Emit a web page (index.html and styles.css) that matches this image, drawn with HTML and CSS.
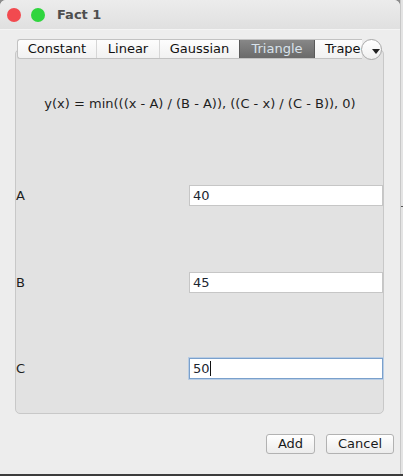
FILE: index.html
```html
<!DOCTYPE html>
<html>
<head>
<meta charset="utf-8">
<link rel="stylesheet" href="styles.css">
</head>
<body>
<div class="screen">
  <div class="window">
    <div class="titlebar">
      <span class="dot red"></span>
      <span class="dot green"></span>
      <span class="title">Fact 1</span>
    </div>
    <div class="content">
      <div class="tabbed">
        <div class="tabrow">
          <div class="tabs">
            <span class="tab w80">Constant</span>
            <span class="tab w63">Linear</span>
            <span class="tab w80">Gaussian</span>
            <span class="tab w75 selected">Triangle</span>
            <span class="tab last">Trape</span>
          </div>
          <span class="more">
            <svg width="8" height="5" viewBox="0 0 8 5"><path d="M0 0 L8 0 L4 5 Z" fill="#222"/></svg>
          </span>
        </div>
        <div class="panel">
          <div class="formula">y(x) = min(((x - A) / (B - A)), ((C - x) / (C - B)), 0)</div>
          <div class="row first">
            <span class="label">A</span>
            <span class="field">40</span>
          </div>
          <div class="row">
            <span class="label">B</span>
            <span class="field">45</span>
          </div>
          <div class="row last-row">
            <span class="label">C</span>
            <span class="field focused">50<span class="caret"></span></span>
          </div>
        </div>
      </div>
      <div class="buttons">
        <span class="btn add">Add</span>
        <span class="btn cancel">Cancel</span>
      </div>
    </div>
  </div>
  <div class="desk"><span class="deskline"></span></div>
</div>
</body>
</html>
```
FILE: styles.css
```css
html, body {
  margin: 0;
  padding: 0;
  background: #5a5a5a;
  font-family: "DejaVu Sans", sans-serif;
  font-size: 13px;
  color: #1e1e1e;
}
.screen {
  display: flex;
  width: 403px;
  height: 476px;
  overflow: hidden;
  background: linear-gradient(#8c8c8c, #3c3c3c);
}
.window {
  width: 400px;
  height: 474px;
  flex: none;
  background: #ededed;
  border-radius: 6px 6px 0 0;
  display: flex;
  flex-direction: column;
}
.desk {
  flex: 1;
  height: 474px;
  background: #e4e4e4;
  border-left: 1px solid #c8c8c8;
  display: flex;
  flex-direction: column;
  padding-top: 206px;
  box-sizing: border-box;
}
.deskline {
  height: 1px;
  background: #555;
}
.titlebar {
  height: 30px;
  display: flex;
  align-items: center;
  padding-left: 7px;
  background: linear-gradient(#ececec, #e0e0e0);
  border-radius: 6px 6px 0 0;
  border-bottom: 1px solid #f4f4f4;
  box-sizing: border-box;
}
.dot {
  width: 14px;
  height: 14px;
  border-radius: 50%;
  margin-right: 10px;
}
.red { background: #f24a4f; }
.green { background: #2fd53e; }
.title {
  margin-left: 2px;
  font-weight: bold;
  color: #4e4e4e;
  font-size: 13px;
}
.content {
  flex: 1;
  display: flex;
  flex-direction: column;
  padding: 9px 16px 0 15px;
}
.tabbed {
  display: flex;
  flex-direction: column;
}
.tabrow {
  display: flex;
  align-items: center;
  height: 20px;
  margin-left: 2px;
  margin-bottom: -10px;
  position: relative;
  z-index: 1;
}
.tabs {
  display: flex;
  width: 345px;
  height: 20px;
  overflow: hidden;
  border: 1px solid #c2c2c2;
  border-right: none;
  border-radius: 3px 0 0 3px;
  box-sizing: border-box;
  background: linear-gradient(#fdfdfd, #f1f1f1);
}
.tab {
  flex: none;
  height: 18px;
  line-height: 18px;
  border-right: 1px solid #d6d6d6;
  color: #111;
  white-space: nowrap;
  text-align: center;
  box-sizing: border-box;
}
.w80 { width: 80px; }
.w63 { width: 63px; }
.w75 { width: 75px; }
.tab.w80:first-child { width: 79px; }
.tab.selected {
  background: linear-gradient(#878787, #6a6a6a);
  color: #d9e3ec;
  border-right: 1px solid #5a5a5a;
  border-left: 1px solid #5a5a5a;
  margin-left: -1px;
  width: 76px;
}
.tab.last {
  border-right: none;
  padding-left: 10px;
  text-align: left;
  flex: 1;
}
.more {
  width: 21px;
  height: 21px;
  margin-left: -1px;
  border-radius: 50%;
  border: 1px solid #a8a8a8;
  background: linear-gradient(#ffffff, #f0f0f0);
  box-sizing: border-box;
  display: flex;
  align-items: center;
  justify-content: center;
  padding: 4px 0 0 9px;
}
.panel {
  height: 365px;
  border: 1px solid #c8c8c8;
  border-radius: 5px;
  background: #e2e2e2;
  box-sizing: border-box;
  display: flex;
  flex-direction: column;
  padding-top: 46px;
}
.formula {
  text-align: center;
  line-height: 16px;
  height: 16px;
  padding-left: 1px;
  color: #1e1e1e;
}
.row {
  display: flex;
  align-items: center;
  margin-top: 66px;
  height: 21px;
}
.row.first { margin-top: 73px; }
.row.last-row { margin-top: 65px; }
.label {
  width: 173px;
  flex: none;
  line-height: 16px;
  padding-top: 1px;
}
.field {
  flex: 1;
  height: 21px;
  background: #fff;
  border: 1px solid #c6c6c6;
  box-sizing: border-box;
  padding-left: 3px;
  line-height: 19px;
  color: #1c2530;
  display: flex;
  align-items: center;
}
.field.focused {
  border: 1px solid #7aa0cc;
  box-shadow: 0 0 0 1px #b9cde4;
}
.caret {
  width: 1px;
  height: 15px;
  background: #111;
}
.buttons {
  display: flex;
  justify-content: flex-end;
  gap: 11px;
  margin-top: 20px;
  margin-right: -10px;
}
.btn {
  height: 20px;
  line-height: 18px;
  border: 1px solid #b2b2b2;
  border-radius: 3px;
  background: linear-gradient(#ffffff, #ececec);
  box-sizing: border-box;
  text-align: center;
  color: #1a1a1a;
}
.add { width: 49px; }
.cancel { width: 68px; }
```
